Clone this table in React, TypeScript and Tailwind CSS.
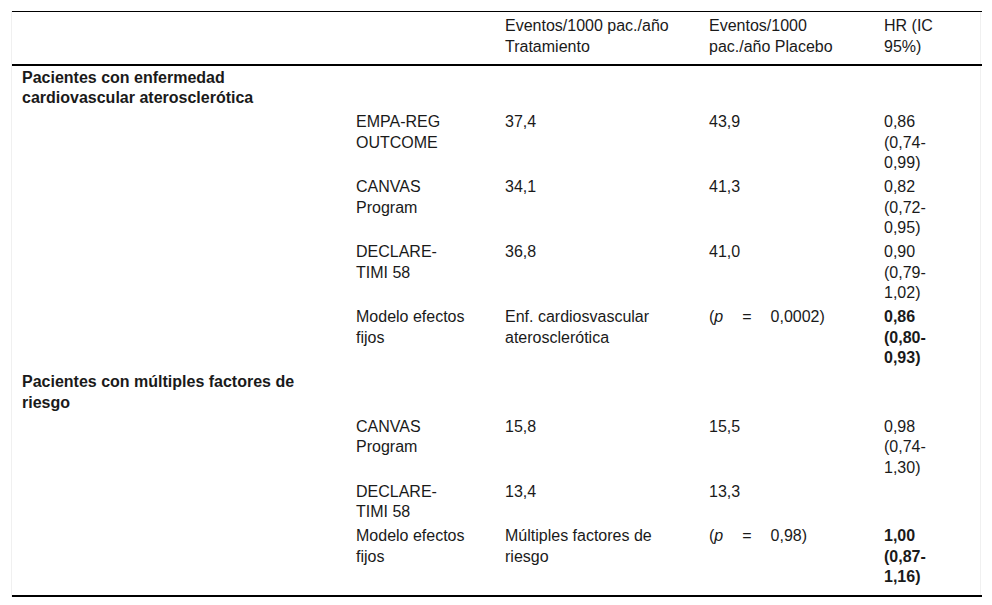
import React from 'react';

type Row =
  | { kind: 'group'; label: string[] }
  | { kind: 'data'; study: string[]; trat: string[]; plac: string[]; hr: string[]; bold?: boolean; pval?: string };

const rows: Row[] = [
  { kind: 'group', label: ['Pacientes con enfermedad', 'cardiovascular aterosclerótica'] },
  { kind: 'data', study: ['EMPA-REG', 'OUTCOME'], trat: ['37,4'], plac: ['43,9'], hr: ['0,86', '(0,74-', '0,99)'] },
  { kind: 'data', study: ['CANVAS', 'Program'], trat: ['34,1'], plac: ['41,3'], hr: ['0,82', '(0,72-', '0,95)'] },
  { kind: 'data', study: ['DECLARE-', 'TIMI 58'], trat: ['36,8'], plac: ['41,0'], hr: ['0,90', '(0,79-', '1,02)'] },
  {
    kind: 'data',
    study: ['Modelo efectos', 'fijos'],
    trat: ['Enf. cardiosvascular', 'aterosclerótica'],
    plac: [],
    pval: '0,0002)',
    hr: ['0,86', '(0,80-', '0,93)'],
    bold: true,
  },
  { kind: 'group', label: ['Pacientes con múltiples factores de', 'riesgo'] },
  { kind: 'data', study: ['CANVAS', 'Program'], trat: ['15,8'], plac: ['15,5'], hr: ['0,98', '(0,74-', '1,30)'] },
  { kind: 'data', study: ['DECLARE-', 'TIMI 58'], trat: ['13,4'], plac: ['13,3'], hr: [] },
  {
    kind: 'data',
    study: ['Modelo efectos', 'fijos'],
    trat: ['Múltiples factores de', 'riesgo'],
    plac: [],
    pval: '0,98)',
    hr: ['1,00', '(0,87-', '1,16)'],
    bold: true,
  },
];

const Lines = ({ lines }: { lines: string[] }) => (
  <>
    {lines.map((l, i) => (
      <React.Fragment key={i}>
        {i > 0 && <br />}
        {l}
      </React.Fragment>
    ))}
  </>
);

const td = 'align-top whitespace-nowrap pl-[10px] py-[1.75px]';

export default function App() {
  return (
    <div className="min-h-screen bg-white pt-[11px] px-[11px] text-[16px] leading-[20.5px] text-[#1a1a1a]" style={{ fontFamily: '"Liberation Sans", Arial, sans-serif' }}>
      <div className="w-[970px] border-x border-[#f0f0f0]">
        <table className="w-full table-fixed border-collapse">
          <colgroup>
            <col className="w-[334px]" />
            <col className="w-[149px]" />
            <col className="w-[204px]" />
            <col className="w-[175px]" />
            <col className="w-[108px]" />
          </colgroup>
          <thead>
            <tr className="border-t border-b-2 border-black">
              <th className="pt-[4px] pb-[7px]" />
              <th />
              <th className="text-left font-normal align-top whitespace-nowrap pl-[10px] pt-[4px] pb-[7px]">
                Eventos/1000 pac./año<br />Tratamiento
              </th>
              <th className="text-left font-normal align-top whitespace-nowrap pl-[10px] pt-[4px] pb-[7px]">
                Eventos/1000<br />pac./año Placebo
              </th>
              <th className="text-left font-normal align-top whitespace-nowrap pl-[10px] pt-[4px] pb-[7px]">
                HR (IC<br />95%)
              </th>
            </tr>
          </thead>
          <tbody className="border-b-2 border-black">
            {rows.map((r, i) =>
              r.kind === 'group' ? (
                <tr key={i}>
                  <td className={`${td} font-bold`}>
                    <Lines lines={r.label} />
                  </td>
                  <td colSpan={4} />
                </tr>
              ) : (
                <tr key={i}>
                  <td />
                  <td className={td}>
                    <Lines lines={r.study} />
                  </td>
                  <td className={td}>
                    <Lines lines={r.trat} />
                  </td>
                  <td className={td}>
                    {r.pval ? (
                      <span className="inline-flex">
                        <span>(<i>p</i></span>
                        <span className="ml-[19px]">=</span>
                        <span className="ml-[19px]">{r.pval}</span>
                      </span>
                    ) : (
                      <Lines lines={r.plac} />
                    )}
                  </td>
                  <td className={`${td} ${r.bold ? 'font-bold' : ''}`}>
                    <Lines lines={r.hr} />
                  </td>
                </tr>
              )
            )}
            <tr>
              <td colSpan={5} className="h-[6px] p-0" />
            </tr>
          </tbody>
        </table>
      </div>
    </div>
  );
}
